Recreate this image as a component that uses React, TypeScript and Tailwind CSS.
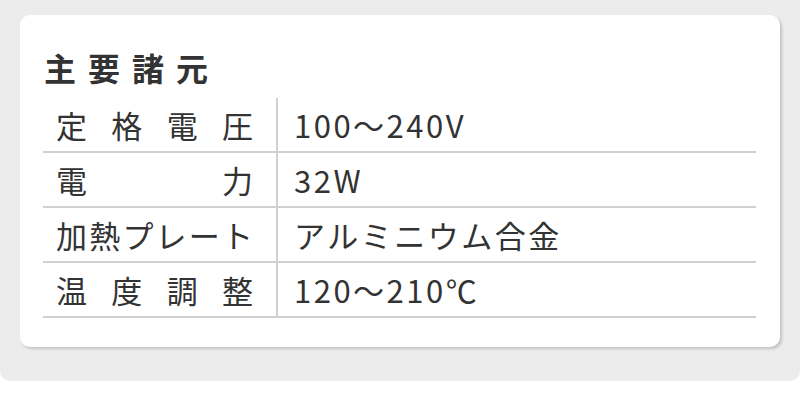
import React from "react";

const rows: { label: string; value: string }[] = [
  { label: "定格電圧", value: "100〜240V" },
  { label: "電力", value: "32W" },
  { label: "加熱プレート", value: "アルミニウム合金" },
  { label: "温度調整", value: "120〜210℃" },
];

export default function App() {
  return (
    <div className="w-[800px] h-[420px] bg-white" style={{ fontFamily: '"Noto Sans CJK JP", "Noto Sans", sans-serif' }}>
      <div className="h-[381px] bg-[#ececec] rounded-b-[10px] pt-[15px] px-[20px]">
        <div className="h-[332px] bg-white rounded-[10px] shadow-[2px_2px_3px_rgba(0,0,0,0.18)] pt-[32px] pl-[23px] pr-[24px]">
          <h1 className="text-[32px] leading-[40px] font-bold tracking-[12px] text-[#333] pl-[1px]">主要諸元</h1>
          <div className="mt-[11px]">
            {rows.map((r) => (
              <div key={r.label} className="flex h-[55px] border-b-2 border-[#d0d0d0]">
                <div className="w-[235px] border-r-2 border-[#d0d0d0] pl-[13px] pr-[23px] flex items-center">
                  <div className="w-full text-[31px] leading-[40px] text-[#333] text-justify [text-align-last:justify]">
                    {r.label}
                  </div>
                </div>
                <div className="flex-1 pl-[16px] flex items-center text-[31px] leading-[40px] text-[#333] tracking-[2.5px] whitespace-nowrap">
                  {r.value}
                </div>
              </div>
            ))}
          </div>
        </div>
      </div>
    </div>
  );
}
